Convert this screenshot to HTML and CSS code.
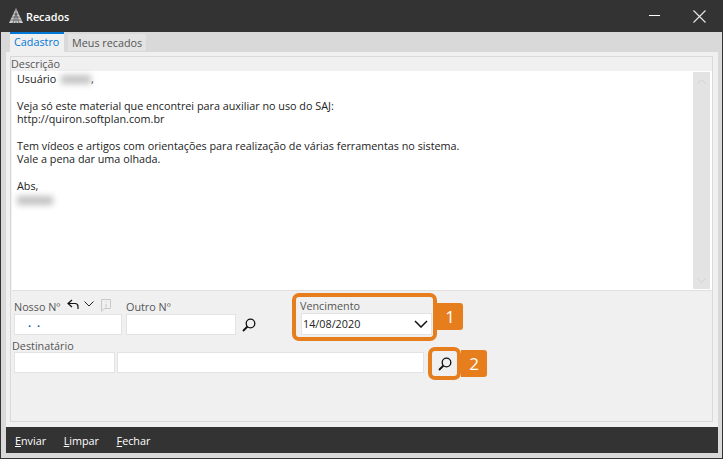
FILE: index.html
```html
<!DOCTYPE html>
<html lang="pt-BR">
<head>
<meta charset="utf-8">
<title>Recados</title>
<link rel="stylesheet" href="styles.css">
</head>
<body>
<div class="window">
  <header class="titlebar">
    <svg class="logo" width="16" height="17" viewBox="0 0 16 17"><path d="M8 1 L15 16 H1 Z" fill="#c9c9c9"/><path d="M8 1v15M5 16L8 6l3 10M2 13h12M3.500 10h9M5 7h6" stroke="#555" stroke-width=".7" fill="none"/></svg>
    <span class="title">Recados</span>
    <span class="winctl">
      <svg width="11" height="2" viewBox="0 0 11 2"><rect width="11" height="1" fill="#fff"/></svg>
      <svg width="13" height="13" viewBox="0 0 13 13"><path d="M.5.500l12 12M12.500.500l-12 12" stroke="#e8e8e8" stroke-width="1.100"/></svg>
    </span>
  </header>
  <div class="client">
    <nav class="tabs">
      <span class="tab active">Cadastro</span>
      <span class="tab">Meus recados</span>
    </nav>
    <main class="panel">
      <section class="group">
        <div class="grouplabel">Descrição</div>
        <div class="memo">
          <div class="memotext">
            <p>Usuário <span class="blur blur-a"></span>,</p>
            <p>Veja só este material que encontrei para auxiliar no uso do SAJ:<br>http://quiron.softplan.com.br</p>
            <p>Tem vídeos e artigos com orientações para realização de várias ferramentas no sistema.<br>Vale a pena dar uma olhada.</p>
            <p>Abs,<br><span class="blur blur-b"></span></p>
          </div>
          <div class="scrollbar">
            <svg width="9" height="5" viewBox="0 0 9 5"><path d="M.5 4.500l4-4 4 4" fill="none" stroke="#d2d2d2"/></svg>
            <svg width="9" height="5" viewBox="0 0 9 5"><path d="M.5.500l4 4 4-4" fill="none" stroke="#d2d2d2"/></svg>
          </div>
        </div>
        <div class="form">
          <div class="row row-one">
            <div class="field f-nosso">
              <div class="labelline">
                <label>Nosso Nº</label>
                <svg class="ic-back" width="12" height="11" viewBox="0 0 12 11"><path d="M5 1L1 4.500 5 8M1 4.500h7q3 0 3 3V10" fill="none" stroke="#111" stroke-width="1.200"/></svg>
                <svg class="ic-down" width="10" height="6" viewBox="0 0 10 6"><path d="M.5.500L5 5 9.500.500" fill="none" stroke="#222"/></svg>
                <svg class="ic-info" width="10" height="13" viewBox="0 0 10 13"><path d="M.5.500h9v9H3L.5 12.500z" fill="none" stroke="#c8c8c8"/><path d="M5 2.500v1M5 5v3.500" stroke="#c8c8c8"/></svg>
              </div>
              <div class="input dots">. .</div>
            </div>
            <div class="field f-outro">
              <label>Outro Nº</label>
              <div class="input"></div>
            </div>
            <svg class="search s-outro" width="14" height="14" viewBox="0 0 14 14"><circle cx="8.500" cy="5.500" r="4.300" fill="none" stroke="#111" stroke-width="1.300"/><path d="M5.500 8.500L1 13" stroke="#111" stroke-width="1.800"/></svg>
            <div class="field f-venc">
              <label>Vencimento</label>
              <div class="input date"><span>14/08/2020</span>
                <svg width="14" height="8" viewBox="0 0 14 8"><path d="M1 1l6 6 6-6" fill="none" stroke="#111" stroke-width="1.500"/></svg>
              </div>
            </div>
          </div>
          <div class="row-two">
            <label>Destinatário</label>
            <div class="row">
              <div class="input f-dest1"></div>
              <div class="input f-dest2"></div>
              <div class="searchbtn">
                <svg class="search" width="14" height="14" viewBox="0 0 14 14"><circle cx="8.500" cy="5.500" r="4.300" fill="none" stroke="#111" stroke-width="1.300"/><path d="M5.500 8.500L1 13" stroke="#111" stroke-width="1.800"/></svg>
              </div>
            </div>
          </div>
          <div class="ring ring-one"></div>
          <div class="badge badge-one">1</div>
          <div class="ring ring-two"></div>
          <div class="badge badge-two">2</div>
        </div>
      </section>
    </main>
    <footer class="actions">
      <span><u>E</u>nviar</span>
      <span><u>L</u>impar</span>
      <span><u>F</u>echar</span>
    </footer>
  </div>
</div>
</body>
</html>
```
FILE: styles.css
```css
* { box-sizing: border-box; }
html, body { margin: 0; padding: 0; }
body {
  width: 724px;
  height: 460px;
  overflow: hidden;
  background: #fff;
  font-family: "Open Sans", "Noto Sans", sans-serif;
  font-size: 10.8px;
  color: #222;
}
.window {
  width: 723px;
  height: 459px;
  display: flex;
  flex-direction: column;
  background: #d9d9d9;
  border-left: 1px solid #333;
  border-right: 1px solid #333;
  border-bottom: 1px solid #333;
}
.titlebar {
  height: 32px;
  flex: none;
  margin: 0 -1px;
  display: flex;
  align-items: center;
  background: #333;
  color: #fff;
  padding-left: 8px;
}
.logo { margin-right: 2px; margin-top: -1px; }
.title { font-weight: 600; font-size: 10.8px; padding-top: 1px; }
.winctl {
  margin-left: auto;
  display: flex;
  align-items: center;
  gap: 33px;
  padding-right: 17px;
}
.client {
  flex: 1;
  min-height: 0;
  display: flex;
  flex-direction: column;
  padding: 0 4px 4px 5px;
}
.tabs {
  height: 20px;
  flex: none;
  display: flex;
  gap: 4px;
  padding-left: 4px;
  align-items: flex-end;
}
.tab {
  height: 17px;
  margin-bottom: 1px;
  padding: 0 4px;
  background: #e3e3e3;
  color: #555;
  line-height: 17px;
}
.tab.active {
  height: 20px;
  margin-bottom: 0;
  padding: 0 4px;
  width: 54px;
  background: #f0f0f0;
  color: #0078d7;
  border-top: 2px solid #0078d7;
  line-height: 16px;
}
.panel {
  flex: 1;
  min-height: 0;
  background: #f0f0f0;
  padding: 4px 5px 5px 4px;
}
.group {
  height: 100%;
  display: flex;
  flex-direction: column;
  border: 1px solid #d9d9d9;
  padding: 0 1px 0 1px;
}
.grouplabel {
  height: 14px;
  line-height: 14px;
  color: #555;
  margin-left: -1px;
}
.memo {
  height: 220px;
  flex: none;
  display: flex;
  background: #fff;
  border-bottom: 1px solid #e0e0e0;
  padding: 1px 1px 1px 0;
  margin-right: -1px;
}
.memotext { flex: 1; padding: 0 0 0 5px; line-height: 13.4px; color: #222; }
.memotext p { margin: 0 0 13.4px; }
.blur {
  display: inline-block;
  background: #c2c2c2;
  filter: blur(3px);
  height: 9px;
  vertical-align: -1px;
}
.blur-a { width: 30px; margin-left: 2px; }
.blur-b { width: 36px; margin-left: 0; }
.scrollbar {
  width: 17px;
  flex: none;
  margin-right: 1px;
  background: #e3e3e3;
  display: flex;
  flex-direction: column;
  justify-content: space-between;
  align-items: center;
  padding: 7px 0 6px;
}
.form { flex: 1; position: relative; }
.row { display: flex; align-items: flex-end; }
.row-one { padding: 9px 0 0 2px; height: 44px; }
label { display: block; color: #555; height: 13px; line-height: 11px; }
.labelline { display: flex; align-items: center; height: 13px; }
.labelline label { margin-right: 7px; }
.ic-back { margin-right: 5px; margin-top: -7px; }
.ic-down { margin-right: 7px; margin-top: -7px; }
.ic-info { margin-top: -5px; }
.input {
  height: 21px;
  background: #fff;
  border: 1px solid #e3e3e3;
}
.dots { color: #0060b0; font-weight: 700; padding-left: 13px; line-height: 16px; letter-spacing: 1.5px; }
.f-nosso { width: 108px; margin-right: 4px; }
.f-outro { width: 110px; margin-right: 6px; }
.s-outro { margin-bottom: 3px; }
.f-venc { width: 131px; margin-left: 45px; }
.f-venc label { margin-left: -1px; }
.date {
  height: 22px;
  display: flex;
  align-items: center;
  justify-content: space-between;
  padding: 0 3px 2px 1px;
  color: #222;
}
.date svg { margin-top: 2px; }
.row-two { padding-left: 1px; margin-top: 5px; }
.row-two label { margin-left: -1px; height: 12px; }
.row-two .row { padding-left: 1px; gap: 2px; align-items: flex-start; }
.f-dest1 { width: 101px; }
.f-dest2 { width: 307px; }
.searchbtn {
  width: 25px;
  height: 25px;
  margin-left: 6px;
  margin-top: -1px;
  display: flex;
  align-items: center;
  justify-content: center;
  background: #f0f0f0;
}
.ring {
  position: absolute;
  border: 4px solid #e67e1e;
  border-radius: 7px;
}
.ring-one { left: 280px; top: 2px; width: 145px; height: 48px; }
.ring-two { left: 416px; top: 56px; width: 33px; height: 33px; }
.badge {
  position: absolute;
  width: 26px;
  height: 27px;
  background: #e67e1e;
  color: #fff;
  font-size: 17px;
  line-height: 27px;
  text-align: center;
  border-radius: 0 3px 3px 0;
}
.badge-one { left: 425px; top: 12px; }
.badge-two { left: 449px; top: 59px; }
.actions {
  height: 26px;
  flex: none;
  margin-bottom: 1px;
  background: #333;
  color: #fff;
  display: flex;
  align-items: center;
  gap: 17.5px;
  padding-left: 9px;
}
```
